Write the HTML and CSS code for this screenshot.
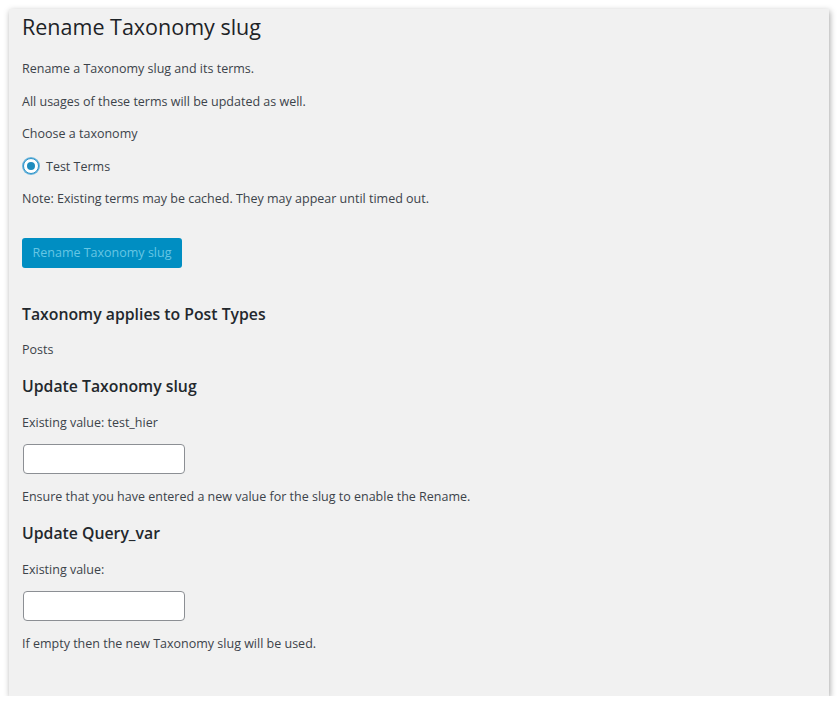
FILE: index.html
```html
<!DOCTYPE html>
<html>
<head>
<meta charset="utf-8">
<link rel="stylesheet" href="styles.css">
</head>
<body>
<div class="panel">
  <h1 class="title">Rename Taxonomy slug</h1>
  <p>Rename a Taxonomy slug and its terms.</p>
  <p>All usages of these terms will be updated as well.</p>
  <p>Choose a taxonomy</p>
  <label class="radio-row"><span class="radio"><span class="dot"></span></span>Test Terms</label>
  <p>Note: Existing terms may be cached. They may appear until timed out.</p>
  <div class="btn-wrap"><button class="btn" disabled>Rename Taxonomy slug</button></div>
  <h2>Taxonomy applies to Post Types</h2>
  <p>Posts</p>
  <h2>Update Taxonomy slug</h2>
  <p class="lbl">Existing value: test_hier</p>
  <div class="field"><input class="text" type="text"></div>
  <p>Ensure that you have entered a new value for the slug to enable the Rename.</p>
  <h2>Update Query_var</h2>
  <p class="lbl">Existing value:</p>
  <div class="field"><input class="text" type="text"></div>
  <p>If empty then the new Taxonomy slug will be used.</p>
</div>
</body>
</html>
```
FILE: styles.css
```css
html, body {
  margin: 0;
  padding: 0;
  background: #ffffff;
}
body {
  font-family: "Open Sans", "Noto Sans", sans-serif;
  font-size: 12.5px;
  color: #3c434a;
}
.panel {
  box-sizing: border-box;
  margin: 9px 0 0 9px;
  width: 820px;
  height: 687px;
  background: #f1f1f1;
  box-shadow: 1px 2px 6px rgba(0, 0, 0, 0.35);
  padding: 0 13px;
  overflow: hidden;
}
.title {
  margin: 0;
  font-size: 21.5px;
  font-weight: 400;
  line-height: 30px;
  color: #1d2327;
  padding: 3px 0 4px;
}
p {
  margin: 13px 0;
  line-height: 19.5px;
}
p.lbl {
  margin-bottom: 12px;
}
.radio-row {
  display: flex;
  align-items: center;
  gap: 7px;
  height: 19.5px;
  margin: 13px 0;
  padding-left: 1px;
}
.radio {
  box-sizing: border-box;
  width: 16px;
  height: 16px;
  border: 1px solid #2f94c8;
  border-radius: 50%;
  background: #fff;
  display: flex;
  align-items: center;
  justify-content: center;
  box-shadow: 0 0 0 1px #6bb5dc;
}
.dot {
  width: 8px;
  height: 8px;
  border-radius: 50%;
  background: #1e8cbe;
}
.btn-wrap {
  margin: 29px 0 0;
  height: 30px;
}
.btn {
  box-sizing: border-box;
  width: 160px;
  height: 30px;
  border: none;
  border-radius: 3px;
  background: #008ec2;
  color: #66c6e4;
  font-family: inherit;
  font-size: 12.5px;
  padding: 0;
  cursor: default;
}
h2 {
  font-size: 15.8px;
  font-weight: 600;
  color: #23282d;
  margin: 15.5px 0;
  line-height: 22px;
}
.btn-wrap + h2 {
  margin-top: 35px;
}
.field {
  margin: 0;
  padding-left: 1px;
  height: 30px;
}
.text {
  box-sizing: border-box;
  width: 162px;
  height: 30px;
  border: 1px solid #8c8f94;
  border-radius: 4px;
  background: #fff;
  margin: 0;
  padding: 0 8px;
}
```
